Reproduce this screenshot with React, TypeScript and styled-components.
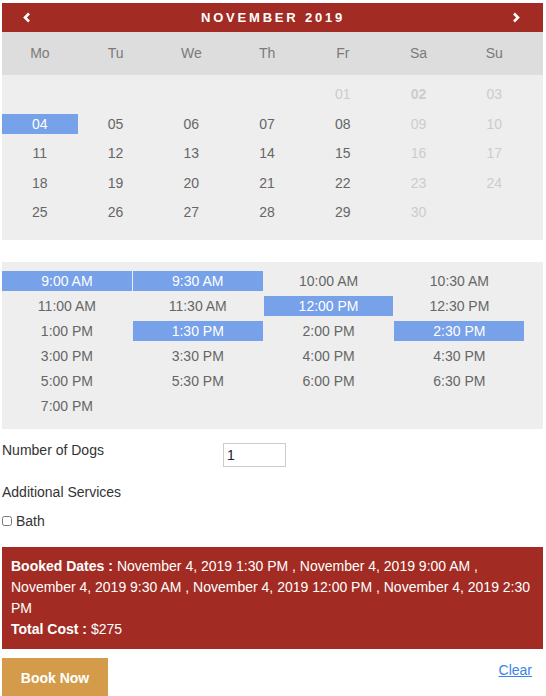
import {FC, useState} from 'react';
import styled, {createGlobalStyle} from 'styled-components';

const GlobalStyle = createGlobalStyle`
  html, body {
    margin: 0;
    padding: 0;
    background: #ffffff;
  }
  body {
    font-family: "Liberation Sans", Arial, sans-serif;
    font-size: 14px;
    color: #333333;
  }
`;

const RED = '#a22c23';
const BLUE = '#77a1e9';

const Page = styled.div`
  width: 541px;
  padding: 3px 3px 0 2px;
`;

const CalHeader = styled.div`
  height: 29px;
  background: ${RED};
  display: flex;
  align-items: center;
  justify-content: space-between;
  padding: 0 22px 0 20px;
  color: #ffffff;
`;

const MonthTitle = styled.div`
  font-family: "Liberation Sans", Arial, sans-serif;
  font-weight: 700;
  font-size: 13px;
  letter-spacing: 2.8px;
  margin-left: 3px;
`;

const NavButton = styled.button`
  background: none;
  border: none;
  padding: 0;
  width: 10px;
  height: 12px;
  display: flex;
  align-items: center;
  justify-content: center;
  cursor: pointer;
`;

const WeekRow = styled.div`
  height: 43px;
  background: #dddddd;
  display: grid;
  grid-template-columns: repeat(7, 14%);
  align-items: center;
`;

const WeekDay = styled.div`
  text-align: center;
  color: #7a7a7a;
  font-size: 14px;
  margin-top: -2px;
`;

const DaysGrid = styled.div`
  background: #eeeeee;
  display: grid;
  grid-template-columns: repeat(7, 14%);
  grid-auto-rows: 20px;
  row-gap: 9.5px;
  padding: 9px 0 18px;
`;

const Day = styled.div<{$state: 'normal' | 'off' | 'selected'; $bold?: boolean}>`
  display: flex;
  align-items: center;
  justify-content: center;
  font-size: 14px;
  font-weight: ${p => (p.$bold ? 700 : 400)};
  color: ${p => (p.$state === 'off' ? '#cccccc' : p.$state === 'selected' ? '#ffffff' : '#666666')};
  background: ${p => (p.$state === 'selected' ? BLUE : 'transparent')};
`;

const TimePanel = styled.div`
  margin-top: 22px;
  background: #eeeeee;
  display: grid;
  grid-template-columns: repeat(4, 24%);
  grid-auto-rows: 20px;
  column-gap: 1px;
  row-gap: 5px;
  padding: 9px 0 13px;
`;

const Slot = styled.div<{$active: boolean}>`
  display: flex;
  align-items: center;
  justify-content: center;
  font-size: 14px;
  color: ${p => (p.$active ? '#ffffff' : '#666666')};
  background: ${p => (p.$active ? BLUE : 'transparent')};
`;

const DogsRow = styled.div`
  display: flex;
  align-items: flex-start;
  padding-top: 11px;
`;

const FieldLabel = styled.div`
  width: 221px;
  line-height: 20px;
`;

const NumberInput = styled.input`
  margin: 3px 0 0;
  width: 63px;
  height: 24px;
  box-sizing: border-box;
  border: 1px solid #cccccc;
  padding: 0 3px;
  font-family: "Liberation Sans", Arial, sans-serif;
  font-size: 14px;
  color: #222222;
  outline: none;
`;

const SectionLabel = styled.div`
  margin-top: 15px;
  line-height: 20px;
`;

const CheckRow = styled.label`
  margin-top: 9px;
  display: flex;
  align-items: center;
  gap: 4px;
  line-height: 20px;
`;

const Check = styled.input`
  margin: 0;
  width: 10px;
  height: 10px;
`;

const Summary = styled.div`
  margin-top: 16px;
  background: ${RED};
  color: #ffffff;
  padding: 9px 9px 9px;
  line-height: 21px;
  font-size: 14px;
`;

const Strong = styled.b`
  display: inline-block;
  font-weight: 700;
  margin-right: 4px;
`;

const Actions = styled.div`
  margin-top: 9px;
  display: flex;
  justify-content: space-between;
  align-items: flex-start;
`;

const BookButton = styled.button`
  width: 106px;
  height: 40px;
  border: none;
  background: #d49c4a;
  color: #ffffff;
  font-family: "Liberation Sans", Arial, sans-serif;
  font-weight: 700;
  font-size: 14px;
  cursor: pointer;
`;

const ClearLink = styled.a`
  margin: 2px 11px 0 0;
  color: #3a83ea;
  text-decoration: underline;
  font-size: 14px;
  line-height: 20px;
  cursor: pointer;
`;

const Chevron: FC<{dir: 'left' | 'right'}> = ({dir}) => (
  <svg width="8" height="11" viewBox="0 0 8 11">
    <polyline
      points={dir === 'left' ? '6,1.5 2,5.5 6,9.5' : '2,1.5 6,5.5 2,9.5'}
      fill="none"
      stroke="#ffffff"
      strokeWidth="2.6"
    />
  </svg>
);

const weekDays = ['Mo', 'Tu', 'We', 'Th', 'Fr', 'Sa', 'Su'];

const times = [
  '9:00 AM', '9:30 AM', '10:00 AM', '10:30 AM',
  '11:00 AM', '11:30 AM', '12:00 PM', '12:30 PM',
  '1:00 PM', '1:30 PM', '2:00 PM', '2:30 PM',
  '3:00 PM', '3:30 PM', '4:00 PM', '4:30 PM',
  '5:00 PM', '5:30 PM', '6:00 PM', '6:30 PM',
  '7:00 PM',
];

const App: FC = () => {
  const [picked, setPicked] = useState<string[]>(['9:00 AM', '9:30 AM', '12:00 PM', '1:30 PM', '2:30 PM']);
  const [dogs, setDogs] = useState('1');

  // november 2019 starts on a friday, weekends are unavailable
  const cells: (number | null)[] = [null, null, null, null];
  for (let d = 1; d <= 30; d++) cells.push(d);

  const toggle = (t: string) =>
    setPicked(prev => (prev.includes(t) ? prev.filter(x => x !== t) : [...prev, t]));

  return (
    <Page>
      <GlobalStyle />
      <CalHeader>
        <NavButton aria-label="previous month"><Chevron dir="left" /></NavButton>
        <MonthTitle>NOVEMBER 2019</MonthTitle>
        <NavButton aria-label="next month"><Chevron dir="right" /></NavButton>
      </CalHeader>
      <WeekRow>
        {weekDays.map(w => <WeekDay key={w}>{w}</WeekDay>)}
      </WeekRow>
      <DaysGrid>
        {cells.map((d, i) => {
          if (d === null) return <Day key={i} $state="normal" />;
          const col = i % 7;
          const off = d < 4 || col >= 5;
          const state = d === 4 ? 'selected' : off ? 'off' : 'normal';
          return (
            <Day key={i} $state={state} $bold={d === 2}>
              {String(d).padStart(2, '0')}
            </Day>
          );
        })}
      </DaysGrid>
      <TimePanel>
        {times.map(t => (
          <Slot key={t} $active={picked.includes(t)} onClick={() => toggle(t)}>{t}</Slot>
        ))}
      </TimePanel>
      <DogsRow>
        <FieldLabel>Number of Dogs</FieldLabel>
        <NumberInput value={dogs} onChange={e => setDogs(e.target.value)} />
      </DogsRow>
      <SectionLabel>Additional Services</SectionLabel>
      <CheckRow>
        <Check type="checkbox" />
        Bath
      </CheckRow>
      <Summary>
        <Strong>Booked Dates :</Strong>November 4, 2019 1:30 PM , November 4, 2019 9:00 AM , November 4, 2019 9:30 AM , November 4, 2019 12:00 PM , November 4, 2019 2:30 PM
        <br />
        <Strong>Total Cost :</Strong>$275
      </Summary>
      <Actions>
        <BookButton>Book Now</BookButton>
        <ClearLink>Clear</ClearLink>
      </Actions>
    </Page>
  );
};

export default App;
